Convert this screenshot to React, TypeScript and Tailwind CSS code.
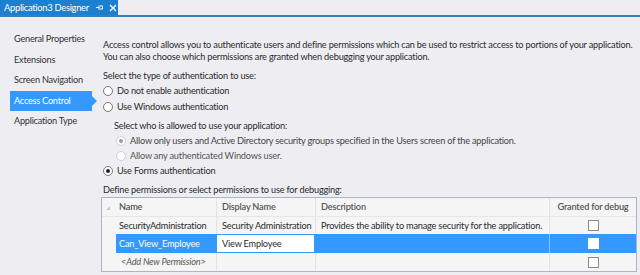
import React from 'react';

const navItems = ['General Properties', 'Extensions', 'Screen Navigation', 'Access Control', 'Application Type'];

const Radio = ({ checked, faded }: { checked?: boolean; faded?: boolean }) => (
  <span
    className={`w-[10px] h-[10px] rounded-full border flex items-center justify-center bg-white shrink-0 ${
      faded ? 'border-[#d0d0d0]' : 'border-[#7a7a7a]'
    }`}
  >
    {checked && <span className={`w-[4px] h-[4px] rounded-full ${faded ? 'bg-[#9a9a9a]' : 'bg-[#222]'}`}></span>}
  </span>
);

const Check = ({ filled }: { filled?: boolean }) => (
  <span className={`w-[11px] h-[11px] border bg-white ${filled ? 'border-white' : 'border-[#8a8a8a]'}`}></span>
);

const App: React.FC = () => {
  return (
    <div
      className="w-[640px] h-[275px] bg-[#eeeef2] overflow-hidden text-[#1e1e1e] whitespace-nowrap"
      style={{ fontFamily: 'Lato, "Noto Sans", sans-serif' }}
    >
      <div className="h-[15px] flex">
        <div className="w-[118px] bg-[#1c7fd0] text-white text-[9.4px] tracking-[-0.3px] leading-[15px] flex items-center pl-[4px]">
          <span>Application3 Designer</span>
          <svg width="9" height="9" viewBox="0 0 9 9" className="ml-[6px]">
            <path d="M1 4.5h3M4 2.5v4M4.5 3h3v3h-3" stroke="white" strokeWidth="1" fill="none" />
          </svg>
          <svg width="8" height="8" viewBox="0 0 8 8" className="ml-[5px]">
            <path d="M1 1l6 6M7 1L1 7" stroke="white" strokeWidth="1.3" />
          </svg>
        </div>
      </div>
      <div className="h-[2px] bg-[#3d7fb4]"></div>

      <div className="flex">
        <div className="w-[101px] pt-[12px] pl-[10px] shrink-0">
          {navItems.map((item) => {
            const sel = item === 'Access Control';
            return (
              <div key={item} className="relative h-[20.5px] w-[82px]">
                <div
                  className={`h-full flex items-center pl-[4px] text-[9.2px] tracking-[-0.25px] ${
                    sel ? 'bg-[#3399ff] text-white' : 'text-[#333]'
                  }`}
                >
                  {item}
                </div>
                {sel && (
                  <span className="absolute left-[82px] top-[5px] w-0 h-0 border-y-[5px] border-y-transparent border-l-[5px] border-l-[#3399ff]"></span>
                )}
              </div>
            );
          })}
        </div>

        <div className="flex-1 pt-[22px] text-[9.2px] tracking-[-0.2px] leading-[12px] text-[#2a2a2a]">
          <div className="pl-[2px]">
            <div>Access control allows you to authenticate users and define permissions which can be used to restrict access to portions of your application.</div>
            <div>You can also choose which permissions are granted when debugging your application.</div>
          </div>
          <div className="pl-[2px] mt-[7px]">Select the type of authentication to use:</div>
          <div className="mt-[1px] h-[16px] flex items-center gap-[4px] pl-[2px]">
            <Radio />
            <span>Do not enable authentication</span>
          </div>
          <div className="h-[16px] flex items-center gap-[4px] pl-[2px]">
            <Radio />
            <span>Use Windows authentication</span>
          </div>
          <div className="mt-[5px] pl-[13px]">Select who is allowed to use your application:</div>
          <div className="h-[15px] flex items-center gap-[4px] pl-[15px] mt-[1px] text-[#444]">
            <Radio checked faded />
            <span>Allow only users and Active Directory security groups specified in the Users screen of the application.</span>
          </div>
          <div className="h-[15px] flex items-center gap-[4px] pl-[15px] text-[#555]">
            <Radio faded />
            <span>Allow any authenticated Windows user.</span>
          </div>
          <div className="h-[16px] flex items-center gap-[4px] pl-[2px]">
            <Radio checked />
            <span>Use Forms authentication</span>
          </div>
          <div className="pl-[2px] mt-[5px]">Define permissions or select permissions to use for debugging:</div>

          <div className="mt-[1px] w-[536px] border border-[#a9b6c6] bg-[#f5f5f6]">
            <div className="flex h-[18px] text-[#555] font-semibold">
              <div className="w-[14px] shrink-0 flex items-end justify-start pb-[6px] pl-[4px]">
                <svg width="4" height="4" viewBox="0 0 4 4">
                  <path d="M4 0v4H0z" fill="#c8c8c8" />
                </svg>
              </div>
              <div className="w-[100px] shrink-0 overflow-hidden flex items-center pl-[3px]">Name</div>
              <div className="w-[99px] shrink-0 overflow-hidden flex items-center pl-[5px] border-l border-[#e2e2e2]">Display Name</div>
              <div className="w-[234px] shrink-0 overflow-hidden flex items-center pl-[5px] border-l border-[#e2e2e2]">Description</div>
              <div className="flex-1 min-w-0 flex items-center justify-center border-l border-[#e2e2e2]">Granted for debug</div>
            </div>
            <div className="flex h-[18px] border-t border-[#e6e6e6]">
              <div className="w-[14px] shrink-0"></div>
              <div className="w-[100px] shrink-0 overflow-hidden flex items-center pl-[3px]">SecurityAdministration</div>
              <div className="w-[99px] shrink-0 overflow-hidden flex items-center pl-[5px] border-l border-[#e2e2e2]">Security Administration</div>
              <div className="w-[234px] shrink-0 overflow-hidden flex items-center pl-[5px] border-l border-[#e2e2e2]">Provides the ability to manage security for the application.</div>
              <div className="flex-1 min-w-0 flex items-center justify-center border-l border-[#e2e2e2]">
                <Check />
              </div>
            </div>
            <div className="flex h-[19px]">
              <div className="w-[14px] shrink-0"></div>
              <div className="w-[100px] shrink-0 overflow-hidden flex items-center pl-[3px] bg-[#3399ff] text-white">Can_View_Employee</div>
              <div className="w-[99px] shrink-0 overflow-hidden flex items-center pl-[5px] bg-white border border-[#3399ff]">View Employee</div>
              <div className="w-[234px] shrink-0 bg-[#3399ff]"></div>
              <div className="flex-1 min-w-0 flex items-center justify-center bg-[#3399ff] border-l border-[#8cc4ff]">
                <Check filled />
              </div>
            </div>
            <div className="flex h-[18px]">
              <div className="w-[14px] shrink-0"></div>
              <div className="w-[100px] shrink-0 overflow-hidden flex items-center pl-[5px] italic text-[#555]">&lt;Add New Permission&gt;</div>
              <div className="w-[99px] shrink-0 border-l border-[#e2e2e2]"></div>
              <div className="w-[234px] shrink-0 border-l border-[#e2e2e2]"></div>
              <div className="flex-1 min-w-0 flex items-center justify-center border-l border-[#e2e2e2]">
                <Check />
              </div>
            </div>
          </div>
        </div>
      </div>
    </div>
  );
};

export default App;
